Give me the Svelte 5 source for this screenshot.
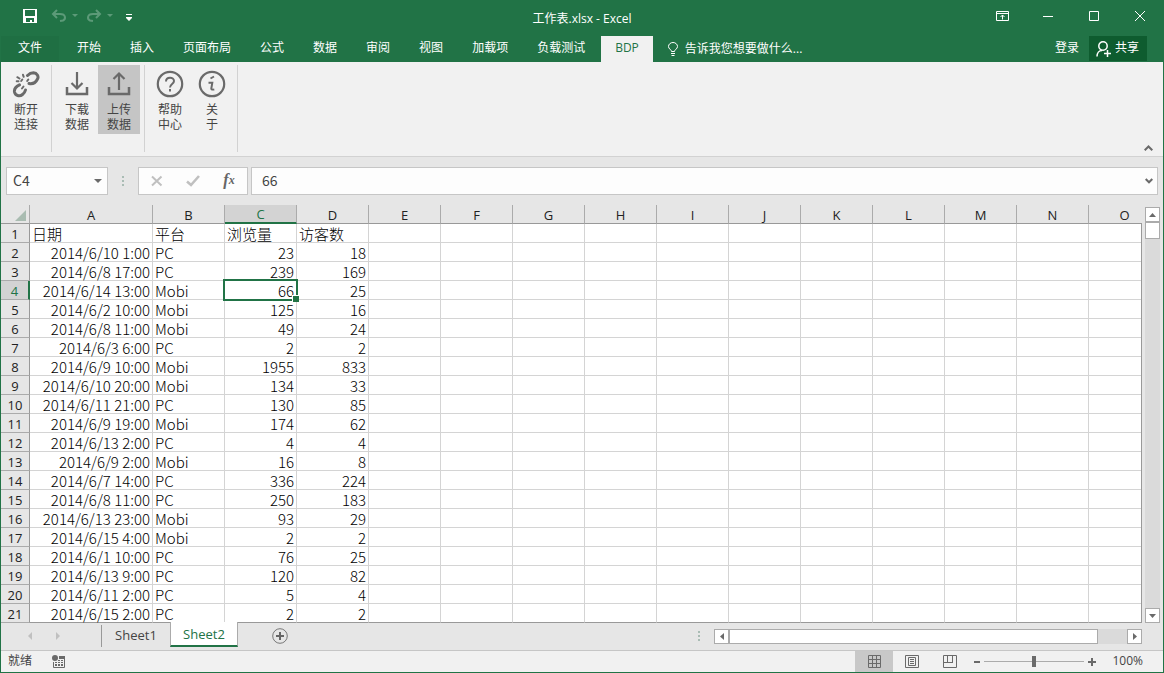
<script>
  const menus = ['开始', '插入', '页面布局', '公式', '数据', '审阅', '视图', '加载项', '负载测试', 'BDP']
  const columns = 'ABCDEFGHIJKLMNO'.split('')
  const blanks = columns.slice(4)
  const sheets = ['Sheet1', 'Sheet2']

  const rows = [
    ['日期', '平台', '浏览量', '访客数'],
    ['2014/6/10 1:00', 'PC', 23, 18],
    ['2014/6/8 17:00', 'PC', 239, 169],
    ['2014/6/14 13:00', 'Mobi', 66, 25],
    ['2014/6/2 10:00', 'Mobi', 125, 16],
    ['2014/6/8 11:00', 'Mobi', 49, 24],
    ['2014/6/3 6:00', 'PC', 2, 2],
    ['2014/6/9 10:00', 'Mobi', 1955, 833],
    ['2014/6/10 20:00', 'Mobi', 134, 33],
    ['2014/6/11 21:00', 'PC', 130, 85],
    ['2014/6/9 19:00', 'Mobi', 174, 62],
    ['2014/6/13 2:00', 'PC', 4, 4],
    ['2014/6/9 2:00', 'Mobi', 16, 8],
    ['2014/6/7 14:00', 'PC', 336, 224],
    ['2014/6/8 11:00', 'PC', 250, 183],
    ['2014/6/13 23:00', 'Mobi', 93, 29],
    ['2014/6/15 4:00', 'Mobi', 2, 2],
    ['2014/6/1 10:00', 'PC', 76, 25],
    ['2014/6/13 9:00', 'PC', 120, 82],
    ['2014/6/11 2:00', 'PC', 5, 4],
    ['2014/6/15 2:00', 'PC', 2, 2],
  ]

  let activeMenu = 'BDP'
  let activeSheet = 'Sheet2'
  let row = 3
  let col = 2
  let zoom = 100

  $: cellName = columns[col] + (row + 1)
  $: cellValue = rows[row][col] ?? ''

  const select = (r, c) => {
    row = r
    col = c
  }
</script>

<div class="window">
  <header class="titlebar">
    <div class="quick">
      <button class="save" aria-label="保存">
        <svg width="14" height="14" viewBox="0 0 14 14">
          <path d="M0 0h14v14H0z" fill="#fff" />
          <path d="M2 1h10v6H2zM3 9h8v4H9v-2H7v2H3z" fill="#217346" />
        </svg>
      </button>
      <button aria-label="撤消">
        <svg width="27" height="14" viewBox="0 0 27 14" fill="none" stroke="#5c9a78" stroke-width="2">
          <path d="M6 1L2 5l4 4M2 5h7c6 0 6 5 3 6.500l-3 .5" />
          <path d="M21 5h6l-3 3z" fill="#5c9a78" stroke="none" />
        </svg>
      </button>
      <button aria-label="恢复">
        <svg width="27" height="14" viewBox="0 0 27 14" fill="none" stroke="#5c9a78" stroke-width="2">
          <path d="M10 1l4 4-4 4M14 5H7C1 5 1 10 4 11.500l3 .5" />
          <path d="M21 5h6l-3 3z" fill="#5c9a78" stroke="none" />
        </svg>
      </button>
      <button class="custom" aria-label="自定义快速访问工具栏">
        <svg width="6" height="7" viewBox="0 0 6 7" fill="#fff">
          <path d="M0 0h6v1H0zM0 3h6v1L3 7 0 4z" />
        </svg>
      </button>
    </div>
    <h1>工作表.xlsx - Excel</h1>
    <div class="controls">
      <button aria-label="功能区显示选项">
        <svg width="13" height="10" viewBox="0 0 13 10" fill="none" stroke="#fff">
          <path d="M.5 .5h12v9H.5zM1 2.500h11M6.500 8.500V4M4.500 6l2-2 2 2" />
        </svg>
      </button>
      <button aria-label="最小化">
        <svg width="10" height="10" viewBox="0 0 10 10"><path d="M0 5h10v1H0z" fill="#fff" /></svg>
      </button>
      <button aria-label="最大化">
        <svg width="10" height="10" viewBox="0 0 10 10"><path d="M.5 .5h9v9h-9z" fill="none" stroke="#fff" /></svg>
      </button>
      <button aria-label="关闭">
        <svg width="10" height="10" viewBox="0 0 10 10"><path d="M0 0l10 10M10 0L0 10" stroke="#fff" /></svg>
      </button>
    </div>
  </header>

  <nav class="menubar">
    <button class="file">文件</button>
    {#each menus as menu}
      <button class:active={menu === activeMenu} on:click={() => (activeMenu = menu)}>{menu}</button>
    {/each}
    <button class="tell">
      <svg width="10" height="14" viewBox="0 0 10 14" fill="none" stroke="#fff">
        <path d="M3.500 9.500C3.500 7.500 .5 7 .5 4.500a4.500 4 0 0 1 9 0C9.500 7 6.500 7.500 6.500 9.500zM3 11.500h4M3.500 13.500h3" />
      </svg>
      告诉我您想要做什么...
    </button>
    <button class="login">登录</button>
    <button class="share">
      <svg width="15" height="16" viewBox="0 0 15 16" fill="none" stroke="#fff" stroke-width="1.500">
        <circle cx="7" cy="5" r="4.200" />
        <path d="M1 15.500C1 12 3 9.500 6 9.500M8 12.500h7M11.500 9v7" />
      </svg>
      共享
    </button>
  </nav>

  <section class="ribbon">
    <div class="group">
      <button>
        <svg width="28" height="28" viewBox="0 0 28 28" fill="none" stroke="#6a6a6a" stroke-width="3" stroke-linecap="round">
          <path d="M15.500 5.500c2-2 4-2.700 6-2.700 3.500.2 5.500 3.700 4 6.200-1.700 3.500-5 5.200-8.500 4.500M7.500 14.800c-3 1.500-5.500 4.200-5 7.200.7 3.500 5 5 8 2.500 1.700-1.300 2.500-2.500 3-4.500" />
          <path d="M5.300 7.200l2.200 1.300M11 4.800l.7 2M4.700 11.200h1.800M10.300 9.500L9.200 11M16.300 9.500l-1.100 1.500M11.500 16.500L10 18.500" stroke-width="2" />
        </svg>
        <span>断开<br />连接</span>
      </button>
    </div>
    <div class="group">
      <button>
        <svg width="28" height="28" viewBox="0 0 28 28" fill="none" stroke="#6a6a6a" stroke-width="2.200">
          <path d="M14 2v16M8.500 13l5.500 5.500 5.500-5.500" />
          <path d="M4 17v7h20v-7" stroke-width="2.500" />
        </svg>
        <span>下载<br />数据</span>
      </button>
      <button class="active">
        <svg width="28" height="28" viewBox="0 0 28 28" fill="none" stroke="#6a6a6a" stroke-width="2.200">
          <path d="M14 20V4M8.500 9l5.500-5.500L19.500 9" />
          <path d="M4 17v7h20v-7" stroke-width="2.500" />
        </svg>
        <span>上传<br />数据</span>
      </button>
    </div>
    <div class="group">
      <button>
        <svg width="28" height="28" viewBox="0 0 28 28" fill="none" stroke="#6a6a6a" stroke-width="2.200">
          <circle cx="14" cy="14" r="12.200" />
          <path d="M10 11.500c0-5 8-5 8-.5 0 3-4 3-4 6.500M14 19v2.500" stroke-width="2" />
        </svg>
        <span>帮助<br />中心</span>
      </button>
      <button>
        <svg width="28" height="28" viewBox="0 0 28 28" fill="none" stroke="#6a6a6a" stroke-width="2.200">
          <circle cx="14" cy="14" r="12.200" />
          <path d="M12.500 8.500l3.500-2M10.500 12.800h3.800l-1 5.700q0 1.500 3 1" stroke-width="2" />
        </svg>
        <span>关<br />于</span>
      </button>
    </div>
    <button class="collapse" aria-label="折叠功能区">
      <svg width="9" height="6" viewBox="0 0 9 6"><path d="M.7 5.300l3.800-3.800 3.800 3.800" fill="none" stroke="#6a6a6a" stroke-width="2" /></svg>
    </button>
  </section>

  <section class="formula">
    <div class="namebox">
      <input aria-label="名称框" value={cellName} />
      <button aria-label="名称列表">
        <svg width="8" height="4" viewBox="0 0 8 4"><path d="M0 0h8L4 4z" fill="#6a6a6a" /></svg>
      </button>
    </div>
    <svg class="dots" width="2" height="10" viewBox="0 0 2 10" fill="#a9bcb4"><path d="M0 0h2v2H0zM0 4h2v2H0zM0 8h2v2H0z" /></svg>
    <div class="fxbox">
      <button aria-label="取消">
        <svg width="12" height="12" viewBox="0 0 12 12"><path d="M1 1.500l9.500 9M10.500 1.500L1 10.500" stroke="#c0c0c0" stroke-width="2" /></svg>
      </button>
      <button aria-label="输入">
        <svg width="14" height="12" viewBox="0 0 14 12"><path d="M1 6.500L5 10l8-9" fill="none" stroke="#c0c0c0" stroke-width="2.600" /></svg>
      </button>
      <button class="fx" aria-label="插入函数">f<sub>x</sub></button>
    </div>
    <div class="valuebox">
      <input aria-label="编辑栏" value={cellValue} />
      <button aria-label="展开编辑栏">
        <svg width="8" height="6" viewBox="0 0 8 6"><path d="M.7 1L4 4.300 7.300 1" fill="none" stroke="#6a6a6a" stroke-width="2" /></svg>
      </button>
    </div>
  </section>

  <main class="sheet">
    <div class="grid">
      <table>
        <colgroup>
          <col class="w-num" />
          <col class="w-date" />
          {#each columns.slice(1) as _}
            <col class="w-cell" />
          {/each}
        </colgroup>
        <thead>
          <tr>
            <th class="corner" aria-label="全选">
              <svg width="11" height="11" viewBox="0 0 11 11"><path d="M11 0v11H0z" fill="#a9bcb1" /></svg>
            </th>
            {#each columns as letter, c}
              <th scope="col" class:current={c === col}>{letter}</th>
            {/each}
          </tr>
        </thead>
        <tbody>
          {#each rows as cells, r}
            <tr>
              <th scope="row" class:current={r === row}>{r + 1}</th>
              {#each cells as value, c}
                <td
                  class:right={r > 0 && c !== 1}
                  class:selected={r === row && c === col}
                  on:click={() => select(r, c)}>{value}</td>
              {/each}
              {#each blanks as _}
                <td></td>
              {/each}
            </tr>
          {/each}
        </tbody>
      </table>
    </div>
    <div class="vscroll">
      <button aria-label="向上滚动">
        <svg width="7" height="4" viewBox="0 0 7 4"><path d="M0 4h7L3.500 0z" fill="#6a6a6a" /></svg>
      </button>
      <div class="thumb"></div>
      <button class="down" aria-label="向下滚动">
        <svg width="7" height="4" viewBox="0 0 7 4"><path d="M0 0h7L3.500 4z" fill="#6a6a6a" /></svg>
      </button>
    </div>
  </main>

  <section class="sheetbar">
    <div class="tabs">
      <div class="arrows">
        <button aria-label="上一张">
          <svg width="4" height="8" viewBox="0 0 4 8"><path d="M4 0v8L0 4z" fill="#c0c0c0" /></svg>
        </button>
        <button aria-label="下一张">
          <svg width="4" height="8" viewBox="0 0 4 8"><path d="M0 0v8l4-4z" fill="#c0c0c0" /></svg>
        </button>
      </div>
      {#each sheets as sheet}
        <button class="tab" class:active={sheet === activeSheet} on:click={() => (activeSheet = sheet)}>{sheet}</button>
      {/each}
      <button class="add" aria-label="新工作表">
        <svg width="16" height="16" viewBox="0 0 16 16" fill="none" stroke="#777">
          <circle cx="8" cy="8" r="7.300" />
          <path d="M4 8h8M8 4v8" stroke="#666" stroke-width="2" />
        </svg>
      </button>
      <svg class="dots" width="2" height="10" viewBox="0 0 2 10" fill="#a9bcb4"><path d="M0 0h2v2H0zM0 4h2v2H0zM0 8h2v2H0z" /></svg>
    </div>
    <div class="hscroll">
      <button aria-label="向左滚动">
        <svg width="4" height="7" viewBox="0 0 4 7"><path d="M4 0v7L0 3.500z" fill="#6a6a6a" /></svg>
      </button>
      <div class="thumb"></div>
      <div class="track"></div>
      <button aria-label="向右滚动">
        <svg width="4" height="7" viewBox="0 0 4 7"><path d="M0 0v7l4-3.500z" fill="#6a6a6a" /></svg>
      </button>
    </div>
  </section>

  <footer class="status">
    <span class="ready">就绪</span>
    <button class="macro" aria-label="录制宏">
      <svg width="13" height="13" viewBox="0 0 13 13" fill="#6a6a6a">
        <circle cx="3" cy="3" r="3" />
        <path d="M7 1h6v3H7z" />
        <path d="M1.500 7v5.500h11V3" fill="none" stroke="#6a6a6a" />
        <path d="M3 7h2v1H3zM6 5h2v1H6zM9 5h2v1H9zM6 7h2v1H6zM9 7h2v1H9zM3 9h2v2H3zM6 9h2v2H6zM9 9h2v2H9z" />
      </svg>
    </button>
    <button class="view active" aria-label="普通">
      <svg width="13" height="13" viewBox="0 0 13 13" fill="none" stroke="#6a6a6a">
        <path d="M.5 .5h12v12H.5zM4.500 0v13M8.500 0v13M0 4.500h13M0 8.500h13" />
      </svg>
    </button>
    <button class="view" aria-label="页面布局">
      <svg width="14" height="13" viewBox="0 0 14 13" fill="none" stroke="#6a6a6a">
        <path d="M.5 .5h13v12H.5zM3.500 2.500h7v8h-7zM5 4.500h4M5 6.500h4M5 8.500h4" />
      </svg>
    </button>
    <button class="view" aria-label="分页预览">
      <svg width="14" height="13" viewBox="0 0 14 13" fill="none" stroke="#6a6a6a">
        <path d="M.5 .5h13v12H.5zM4.500 0v7.500M9.500 0v7.500M0 7.500h10" />
      </svg>
    </button>
    <button class="zoom" aria-label="缩小" on:click={() => (zoom -= 10)}>
      <svg width="8" height="8" viewBox="0 0 8 8"><path d="M1 3h6v2H1z" fill="#6a6a6a" /></svg>
    </button>
    <input type="range" min="0" max="200" aria-label="显示比例" bind:value={zoom} />
    <button class="zoom" aria-label="放大" on:click={() => (zoom += 10)}>
      <svg width="8" height="8" viewBox="0 0 8 8"><path d="M0 3h3V0h2v3h3v2H5v3H3V5H0z" fill="#6a6a6a" /></svg>
    </button>
    <span class="percent">{zoom}%</span>
  </footer>
</div>

<style>
  :global(body) {
    margin: 0;
  }

  .window {
    --green: #217346;
    display: flex;
    flex-direction: column;
    min-height: 100vh;
    box-sizing: border-box;
    overflow: hidden;
    border: 1px solid var(--green);
    border-top: 0;
    background: #e6e6e6;
    color: #444;
    font: 12px/15px 'Open Sans', 'Noto Sans CJK SC', sans-serif;
  }

  .window * {
    box-sizing: border-box;
  }

  button {
    display: flex;
    align-items: center;
    justify-content: center;
    margin: 0;
    padding: 0;
    border: 0;
    background: none;
    color: inherit;
    font: inherit;
    white-space: nowrap;
  }

  svg {
    display: block;
    flex: none;
  }

  input {
    min-width: 0;
    margin: 0;
    padding: 0;
    border: 0;
    outline: 0;
    background: none;
    color: inherit;
    font: 14px/18px 'Noto Sans CJK SC', sans-serif;
  }

  /* title bar */
  .titlebar {
    display: grid;
    grid-template-columns: 1fr auto 1fr;
    align-items: center;
    height: 36px;
    padding-bottom: 4px;
    background: var(--green);
    color: #fff;
  }

  .titlebar h1 {
    margin: 0;
    padding-top: 4px;
    font-size: 12px;
    font-weight: 400;
  }

  .quick {
    display: flex;
    align-items: center;
    gap: 8px;
    padding-left: 22px;
  }

  .quick .save {
    margin-right: 6px;
  }

  .quick .custom {
    margin: 2px 0 0 5px;
  }

  .controls {
    display: flex;
    justify-content: flex-end;
  }

  .controls button {
    width: 46px;
    height: 32px;
  }

  /* menu */
  .menubar {
    display: flex;
    height: 26px;
    background: var(--green);
    color: #fff;
  }

  .menubar button {
    padding: 0 14px 3px;
    margin-right: 1px;
  }

  .menubar .file {
    padding: 0 17px 3px;
    margin-right: 4px;
    background: #1f6f43;
  }

  .menubar .active {
    margin-left: 1px;
    background: #f1f1f1;
    color: var(--green);
  }

  .menubar .tell {
    gap: 7px;
    padding: 0 14px 1px;
  }

  .menubar .login {
    margin-left: auto;
    padding: 0 9px 3px;
  }

  .menubar .share {
    gap: 4px;
    height: 25px;
    margin-right: 16px;
    padding: 0 8px 3px 7px;
    background: #0e5c2f;
  }

  .share svg {
    margin-top: 4px;
  }

  /* ribbon */
  .ribbon {
    display: flex;
    height: 95px;
    border-bottom: 1px solid #d2d2d2;
    background: #f1f1f1;
  }

  .group {
    display: flex;
    align-items: flex-start;
    margin: 3px 0 4px;
    padding: 0 4px;
    border-right: 1px solid #d2d2d2;
  }

  .group button {
    flex-direction: column;
    gap: 4px;
    width: 42px;
    height: 69px;
    padding-top: 3px;
  }

  .group .active {
    background: #c5c5c5;
  }

  .collapse {
    align-self: flex-end;
    margin: 0 10px 5px auto;
  }

  /* formula bar */
  .formula {
    display: flex;
    align-items: flex-start;
    height: 48px;
    padding: 10px 5px 0;
  }

  .formula > div {
    display: flex;
    align-items: center;
    height: 28px;
    border: 1px solid #c6c6c6;
    background: #fdfdfd;
  }

  .formula .dots {
    margin: 9px 14px 0;
  }

  .namebox {
    width: 102px;
    padding: 0 5px 0 6px;
  }

  .namebox input,
  .valuebox input {
    flex: 1;
    padding-bottom: 2px;
  }

  .fxbox {
    width: 110px;
    margin-right: 3px;
  }

  .fxbox button {
    flex: 1;
    height: 26px;
  }

  .fxbox .fx {
    padding-bottom: 2px;
    color: #666;
    font: italic bold 16px/20px 'Liberation Serif', serif;
  }

  .fx sub {
    font-size: 12px;
    line-height: 12px;
  }

  .valuebox {
    flex: 1;
    padding: 0 4px 0 10px;
  }

  /* cells */
  .sheet {
    display: flex;
    flex: 1;
  }

  .grid {
    position: relative;
    flex: 1;
    min-width: 0;
    overflow: hidden;
  }

  .grid::after {
    content: '';
    position: absolute;
    top: 19px;
    right: 0;
    bottom: 0;
    width: 1px;
    background: #999;
  }

  table {
    width: 1160px;
    min-width: 100%;
    border-collapse: separate;
    border-spacing: 0;
    table-layout: fixed;
  }

  .w-num {
    width: 29px;
  }

  .w-date {
    width: 123px;
  }

  .w-cell {
    width: 72px;
  }

  th,
  td {
    height: 19px;
    white-space: nowrap;
  }

  th {
    padding: 2px 0 0;
    border-right: 1px solid #ababab;
    border-bottom: 1px solid #999;
    color: #222;
    font: 13px/16px 'Open Sans', sans-serif;
    text-align: center;
  }

  thead th.current {
    border-bottom: 2px solid var(--green);
    background: #d3d3d3;
    color: var(--green);
    line-height: 15px;
  }

  tbody th {
    border-right-color: #999;
    border-bottom-color: #ababab;
  }

  tbody th.current {
    border-right: 2px solid var(--green);
    background: #d3d3d3;
    color: var(--green);
  }

  .corner svg {
    margin: 0 3px 0 auto;
  }

  td {
    position: relative;
    padding: 2px 2px 0;
    border-right: 1px solid #d4d4d4;
    border-bottom: 1px solid #d4d4d4;
    background: #fff;
    color: #000;
    font: 300 15px/16px 'Noto Sans CJK SC', sans-serif;
  }

  .right {
    text-align: right;
  }

  tr:last-child td {
    border-bottom-color: #999;
  }

  .selected::before {
    content: '';
    position: absolute;
    z-index: 1;
    inset: -2px;
    border: 2px solid var(--green);
  }

  .selected::after {
    content: '';
    position: absolute;
    z-index: 2;
    right: -3px;
    bottom: -3px;
    width: 6px;
    height: 6px;
    border: 1px solid #fff;
    border-width: 1px 0 0 1px;
    background: var(--green);
  }

  .vscroll {
    display: flex;
    flex-direction: column;
    width: 15px;
    margin: 2px 3px 0;
    background: #dadada;
  }

  .vscroll button,
  .vscroll .thumb,
  .hscroll button,
  .hscroll .thumb {
    border: 1px solid #ababab;
    background: #fff;
  }

  .vscroll button {
    height: 15px;
  }

  .vscroll .thumb {
    height: 17px;
  }

  .vscroll .down {
    margin-top: auto;
  }

  /* sheet tabs */
  .sheetbar {
    display: flex;
    height: 27px;
    padding-right: 21px;
  }

  .tabs {
    display: flex;
    flex: 5 1 0;
    align-items: flex-start;
  }

  .arrows {
    display: flex;
    gap: 24px;
    height: 22px;
    width: 101px;
    margin-top: 2px;
    padding-left: 27px;
    border-right: 1px solid #999;
  }

  .tab {
    position: relative;
    width: 68px;
    height: 24px;
    font-size: 13px;
    line-height: 18px;
  }

  .tab.active {
    height: 25px;
    margin-top: -1px;
    border: 1px solid #ababab;
    border-width: 0 1px 2px;
    border-bottom-color: var(--green);
    background: #fff;
    color: var(--green);
  }

  .add {
    margin: 5px 0 0 34px;
  }

  .tabs .dots {
    margin: 8px 14px 0 auto;
  }

  .hscroll {
    display: flex;
    flex: 3 1 0;
    height: 15px;
    margin-top: 6px;
    background: #dadada;
  }

  .hscroll button {
    width: 15px;
  }

  .hscroll .thumb {
    flex: 25;
  }

  .hscroll .track {
    flex: 2;
  }

  /* status bar */
  .status {
    display: flex;
    align-items: center;
    height: 22px;
    border-top: 1px solid #c6c6c6;
    background: #f1f1f1;
  }

  .ready {
    padding: 0 20px 2px 7px;
  }

  .macro {
    margin-right: auto;
  }

  .view {
    width: 38px;
    height: 21px;
  }

  .view.active {
    background: #c8c8c8;
  }

  .zoom {
    width: 15px;
    height: 21px;
  }

  input[type='range'] {
    width: 100px;
    height: 11px;
    appearance: none;
    background: linear-gradient(#ababab, #ababab) center / 100% 1px no-repeat;
  }

  input[type='range']::-webkit-slider-thumb {
    width: 4px;
    height: 11px;
    appearance: none;
    background: #6a6a6a;
  }

  .percent {
    width: 64px;
    padding: 0 20px 3px 0;
    text-align: right;
  }
</style>
